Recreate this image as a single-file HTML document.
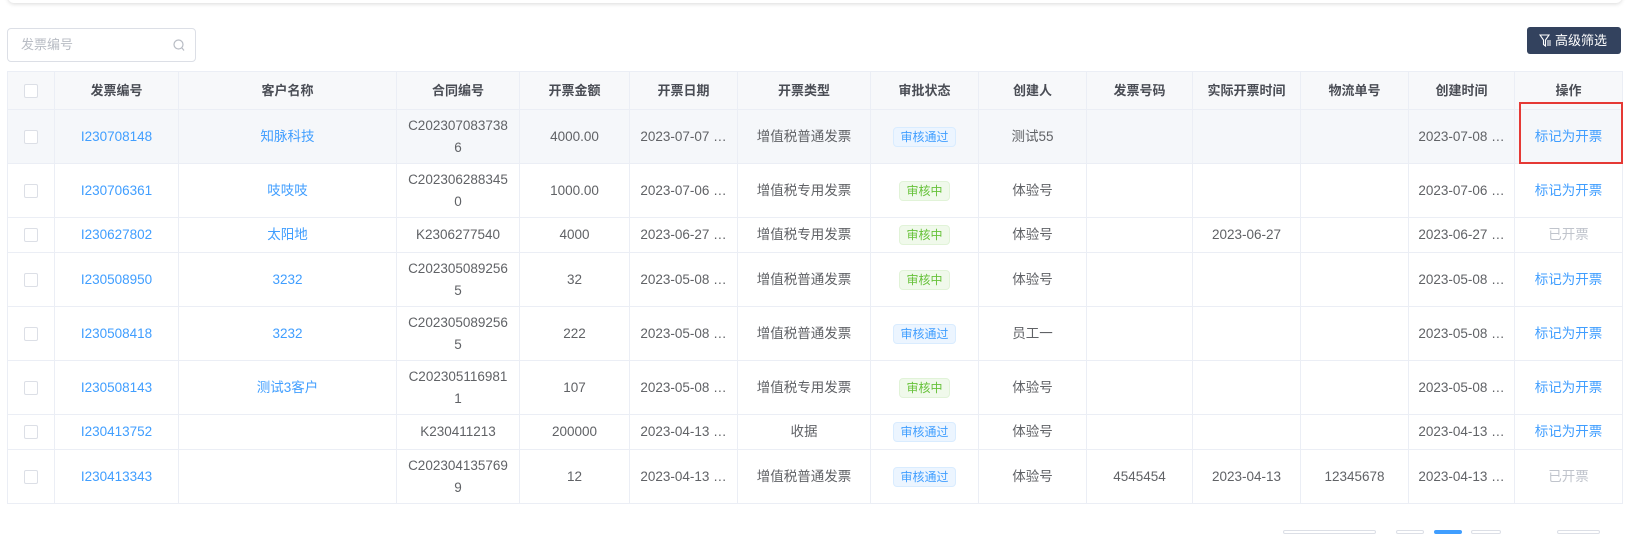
<!DOCTYPE html>
<html><head><meta charset="utf-8"><style>
*{box-sizing:border-box;margin:0;padding:0}
body{width:1630px;height:531px;overflow:hidden;background:#fff;font-family:"Liberation Sans","Noto Sans CJK SC",sans-serif;color:#606266;font-size:14px;position:relative}
.card{position:absolute;left:8px;top:-20px;width:1614px;height:23px;background:#fff;border-radius:6px;box-shadow:0 1px 4px rgba(0,0,0,.15)}
.search{position:absolute;left:7px;top:28px;width:189px;height:34px;border:1px solid #dcdfe6;border-radius:4px;color:#b8bcc4;font-size:13px;line-height:32px;padding-left:13px}
.search svg{position:absolute;right:10px;top:10px}
.btn{position:absolute;left:1527px;top:27px;width:94px;height:27px;background:#33425e;border-radius:3px;color:#fff;font-size:13px;line-height:27px;padding-left:28px}
.btn svg{position:absolute;left:12px;top:7px}
table{position:absolute;left:7px;top:71px;border-collapse:collapse;table-layout:fixed;width:1615px}
td,th{border:1px solid #ebeef5;text-align:center;vertical-align:middle;font-size:13.5px;line-height:22px}
th{background:#f7f8fa;height:38px;font-weight:600;color:#4a4d55;font-size:13px}
tr.r1 td{background:#f5f7fa}
tr.t td{height:54px}tr.s td{height:35px}
.cb{display:inline-block;width:14px;height:14px;border:1px solid #dcdfe6;border-radius:2px;background:#fff;vertical-align:middle}
a{color:#409eff;text-decoration:none}
.g{color:#c0c4cc}
.tb{display:inline-block;font-size:12px;line-height:18px;padding:0 6px;border-radius:4px;border:1px solid #d9ecff;background:#ecf5ff;color:#409eff}
.tg{display:inline-block;font-size:12px;line-height:18px;padding:0 6px;border-radius:4px;border:1px solid #e1f3d8;background:#f0f9eb;color:#67c23a}
.red{position:absolute;left:1519px;top:102px;width:104px;height:62px;border:2px solid #e53935}
.pg{position:absolute;top:530px;height:4px;border:1px solid #dcdfe6;border-radius:3px}
</style></head><body>
<div class="card"></div>
<div class="search">发票编号<svg width="12" height="13" viewBox="0 0 12 13"><circle cx="5.5" cy="5.5" r="4.5" fill="none" stroke="#b8bcc4" stroke-width="1.2"/><path d="M9 9l2 2.5" stroke="#b8bcc4" stroke-width="1.2"/></svg></div>
<div class="btn"><svg width="13" height="13" viewBox="0 0 13 13"><path d="M1 1h9L6.5 6v6L4.5 10.5V6z" fill="none" stroke="#fff" stroke-width="1.1"/><path d="M8 7h4M8 9h4M8 11h4" stroke="#fff" stroke-width="1"/></svg>高级筛选</div>
<table>
<colgroup><col style="width:47px"><col style="width:124px"><col style="width:218px"><col style="width:123px"><col style="width:110px"><col style="width:108px"><col style="width:133px"><col style="width:108px"><col style="width:108px"><col style="width:106px"><col style="width:108px"><col style="width:108px"><col style="width:106px"><col style="width:108px"></colgroup>
<tr><th><span class="cb"></span></th><th>发票编号</th><th>客户名称</th><th>合同编号</th><th>开票金额</th><th>开票日期</th><th>开票类型</th><th>审批状态</th><th>创建人</th><th>发票号码</th><th>实际开票时间</th><th>物流单号</th><th>创建时间</th><th>操作</th></tr>
<tr class="t r1"><td><span class="cb"></span></td><td><a>I230708148</a></td><td><a>知脉科技</a></td><td>C202307083738<br>6</td><td>4000.00</td><td>2023-07-07 …</td><td>增值税普通发票</td><td><span class="tb">审核通过</span></td><td>测试55</td><td></td><td></td><td></td><td>2023-07-08 …</td><td><a>标记为开票</a></td></tr>
<tr class="t"><td><span class="cb"></span></td><td><a>I230706361</a></td><td><a>吱吱吱</a></td><td>C202306288345<br>0</td><td>1000.00</td><td>2023-07-06 …</td><td>增值税专用发票</td><td><span class="tg">审核中</span></td><td>体验号</td><td></td><td></td><td></td><td>2023-07-06 …</td><td><a>标记为开票</a></td></tr>
<tr class="s"><td><span class="cb"></span></td><td><a>I230627802</a></td><td><a>太阳地</a></td><td>K2306277540</td><td>4000</td><td>2023-06-27 …</td><td>增值税专用发票</td><td><span class="tg">审核中</span></td><td>体验号</td><td></td><td>2023-06-27</td><td></td><td>2023-06-27 …</td><td class="g">已开票</td></tr>
<tr class="t"><td><span class="cb"></span></td><td><a>I230508950</a></td><td><a>3232</a></td><td>C202305089256<br>5</td><td>32</td><td>2023-05-08 …</td><td>增值税普通发票</td><td><span class="tg">审核中</span></td><td>体验号</td><td></td><td></td><td></td><td>2023-05-08 …</td><td><a>标记为开票</a></td></tr>
<tr class="t"><td><span class="cb"></span></td><td><a>I230508418</a></td><td><a>3232</a></td><td>C202305089256<br>5</td><td>222</td><td>2023-05-08 …</td><td>增值税普通发票</td><td><span class="tb">审核通过</span></td><td>员工一</td><td></td><td></td><td></td><td>2023-05-08 …</td><td><a>标记为开票</a></td></tr>
<tr class="t"><td><span class="cb"></span></td><td><a>I230508143</a></td><td><a>测试3客户</a></td><td>C202305116981<br>1</td><td>107</td><td>2023-05-08 …</td><td>增值税专用发票</td><td><span class="tg">审核中</span></td><td>体验号</td><td></td><td></td><td></td><td>2023-05-08 …</td><td><a>标记为开票</a></td></tr>
<tr class="s"><td><span class="cb"></span></td><td><a>I230413752</a></td><td></td><td>K230411213</td><td>200000</td><td>2023-04-13 …</td><td>收据</td><td><span class="tb">审核通过</span></td><td>体验号</td><td></td><td></td><td></td><td>2023-04-13 …</td><td><a>标记为开票</a></td></tr>
<tr class="t"><td><span class="cb"></span></td><td><a>I230413343</a></td><td></td><td>C202304135769<br>9</td><td>12</td><td>2023-04-13 …</td><td>增值税普通发票</td><td><span class="tb">审核通过</span></td><td>体验号</td><td>4545454</td><td>2023-04-13</td><td>12345678</td><td>2023-04-13 …</td><td class="g">已开票</td></tr>
</table>
<div class="red"></div>
<div class="pg" style="left:1283px;width:93px"></div>
<div class="pg" style="left:1396px;width:28px"></div>
<div class="pg" style="left:1434px;width:28px;background:#409eff;border-color:#409eff"></div>
<div class="pg" style="left:1471px;width:30px"></div>
<div class="pg" style="left:1557px;width:43px"></div>
</body></html>
